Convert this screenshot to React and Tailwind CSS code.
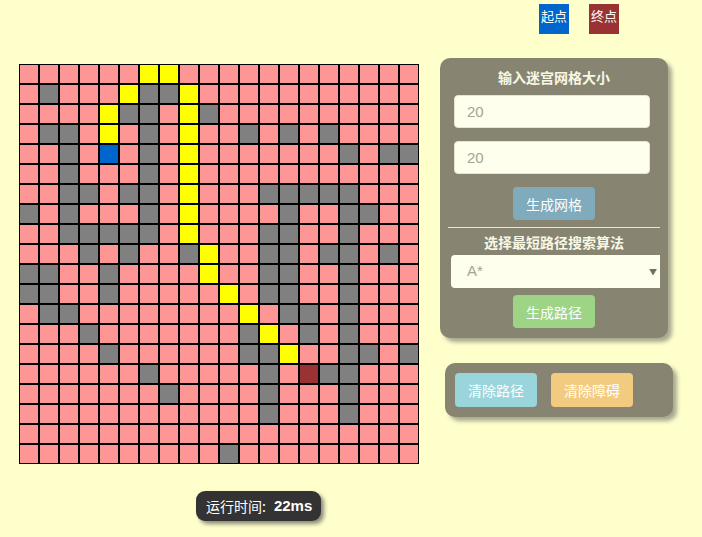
import React from "react"

const rows = [
  "......yy............",
  ".#...y##y...........",
  "....y##.y#..........",
  ".##.y.#.y..#.#.#....",
  "..#.s.#.y.......#.##",
  "..#...#.y...........",
  "..##.##.y...#####...",
  "#.#...#.y....#..##..",
  "..#####.y...##..#...",
  "...#.#..#y..##.##.#.",
  "##..#....y..##..#...",
  "##..#.....y.##..#...",
  ".##........y.##.#...",
  "...#.......#y.#.#...",
  "....#......##y..##.#",
  "......#.....#.e##...",
  ".......#....#...#...",
  "............#...#...",
  "....................",
  "..........#.........",
]

const cellColor = {
  ".": "bg-[#ff9696]",
  "#": "bg-[#808080]",
  y: "bg-[#ffff00]",
  s: "bg-[#0066cc]",
  e: "bg-[#993333]",
}

const cjk = { fontFamily: '"Noto Sans CJK SC", "Liberation Sans", sans-serif' }
const latin = { fontFamily: '"Liberation Sans", sans-serif' }

function Maze() {
  return (
    <div className="grid grid-cols-[repeat(20,20px)] w-[400px]">
      {rows.map((row, r) =>
        row.split("").map((c, i) => (
          <div key={r + "-" + i} className={`w-5 h-5 box-border border border-black ${cellColor[c]}`} />
        ))
      )}
    </div>
  )
}

function Btn({ label, color }) {
  return (
    <button
      className={`w-[82px] h-[33px] rounded text-[14px] text-white leading-none ${color}`}
      style={cjk}
    >
      {label}
    </button>
  )
}

export default function App() {
  return (
    <div className="w-[702px] h-[537px] bg-[#ffffcc] overflow-hidden" style={cjk}>
      {/* legend */}
      <div className="flex gap-5 pl-[539px] pt-1">
        <div className="w-[30px] h-[30px] bg-[#0066cc] text-white text-[13px] leading-[24px] text-center">起点</div>
        <div className="w-[30px] h-[30px] bg-[#993333] text-white text-[13px] leading-[24px] text-center">终点</div>
      </div>

      <div className="flex items-start mt-6">
        <div className="ml-[19px] mt-[6px]">
          <Maze />
        </div>

        <div className="ml-[21px] flex flex-col">
          {/* size panel */}
          <div className="w-[228px] h-[280px] rounded-[10px] bg-[#878572] shadow-[4px_4px_4px_#a8a890] flex flex-col items-center pt-[8px]">
            <div className="text-[14px] font-bold text-[#f8f8e4] leading-[22px]">输入迷宫网格大小</div>
            <div
              className="self-start ml-[14px] mt-[7px] w-[196px] h-[33px] rounded bg-[#ffffee] border border-[#e6e6d0] text-[15px] text-[#a5a595] pl-3 leading-[31px]"
              style={latin}
            >
              20
            </div>
            <div
              className="self-start ml-[14px] mt-[13px] w-[196px] h-[33px] rounded bg-[#ffffee] border border-[#e6e6d0] text-[15px] text-[#a5a595] pl-3 leading-[31px]"
              style={latin}
            >
              20
            </div>
            <div className="mt-[13px]">
              <Btn label="生成网格" color="bg-[#7fabbd]" />
            </div>
            <div className="mt-[7px] w-[212px] h-px bg-[#e8e6d4]" />
            <div className="mt-[3px] text-[14px] font-bold text-[#f8f8e4] leading-[22px]">选择最短路径搜索算法</div>
            <div className="self-start ml-[11px] mt-[2px] w-[209px] h-[33px] rounded-l bg-[#ffffee] flex items-center justify-between pl-4 pr-[3px]">
              <span className="text-[15px] text-[#a5a595]" style={latin}>A*</span>
              <span className="text-[8px] text-[#707060]">▼</span>
            </div>
            <div className="mt-[7px]">
              <Btn label="生成路径" color="bg-[#9dd486]" />
            </div>
          </div>

          {/* clear panel */}
          <div className="ml-[5px] mt-[25px] w-[228px] h-[54px] rounded-[10px] bg-[#878572] shadow-[4px_4px_4px_#a8a890] flex gap-[14px] pl-[10px] pt-[10px]">
            <Btn label="清除路径" color="bg-[#99d5da] h-[34px]" />
            <Btn label="清除障碍" color="bg-[#f2cb80] h-[34px]" />
          </div>
        </div>
      </div>

      {/* runtime */}
      <div className="ml-[196px] mt-[27px] w-[125px] h-[30px] rounded-[9px] bg-[#333333] shadow-[3px_3px_4px_#8a8a7a] flex items-center pl-[10px] text-white text-[14px]">
        <span>运行时间:</span>
        <span className="ml-2 font-semibold text-[15px]" style={latin}>22ms</span>
      </div>
    </div>
  )
}
